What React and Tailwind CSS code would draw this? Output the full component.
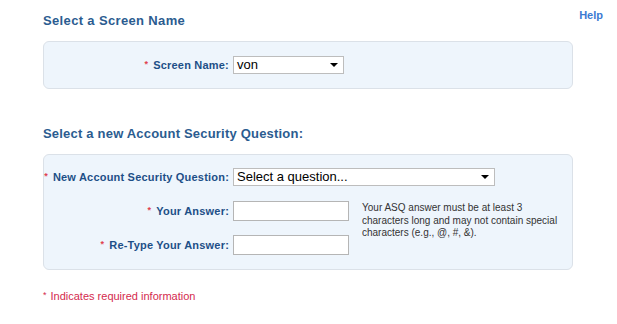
import React from 'react';

const Req = ({ className = '' }) => (
    <span className={`text-[#e0404f] text-[9px] relative -top-[2px] mr-[5px] ${className}`}>*</span>
);

const FakeSelect = ({ value, width }) => (
    <div
        className={`${width} h-[18px] bg-white border border-[#bdbdbd] flex items-center justify-between pl-[3px] pr-[5px]`}
    >
        <span className="text-[13px] leading-[16px] text-black">{value}</span>
        <span className="w-0 h-0 border-l-[4px] border-r-[4px] border-t-[4px] border-l-transparent border-r-transparent border-t-black"></span>
    </div>
);

const Label = ({ children }) => (
    <div className="w-[185px] text-right text-[11px] leading-[13px] font-bold text-[#1d4f87] tracking-[0.2px] pt-[1px]">
        <Req />
        {children}
    </div>
);

export default function App() {
    return (
        <div className="w-[617px] h-[324px] bg-white font-['Liberation_Sans',Arial,sans-serif]">
            <div className="pl-[43px] pr-[14px] pt-[9px]">
                <div className="flex justify-between items-start">
                    <h2 className="mt-[4px] text-[13px] leading-[16px] font-bold text-[#2b5c90] tracking-[0.35px]">
                        Select a Screen Name
                    </h2>
                    <a className="text-[11px] leading-[13px] font-bold text-[#3c7ad2] cursor-pointer">Help</a>
                </div>

                {/* screen name panel */}
                <div className="mt-[12px] w-[530px] h-[48px] rounded-[6px] border border-[#dbe1e8] bg-[#eef5fc] flex items-center">
                    <Label>Screen Name:</Label>
                    <div className="ml-[4px]">
                        <FakeSelect value="von" width="w-[111px]" />
                    </div>
                </div>

                <h2 className="mt-[37px] text-[13px] leading-[16px] font-bold text-[#2b5c90] tracking-[0.2px]">
                    Select a new Account Security Question:
                </h2>

                {/* security question panel */}
                <div className="mt-[12px] w-[530px] h-[116px] rounded-[6px] border border-[#dbe1e8] bg-[#eef5fc] pt-[13px]">
                    <div className="flex items-center h-[18px]">
                        <Label>New Account Security Question:</Label>
                        <div className="ml-[4px]">
                            <FakeSelect value="Select a question..." width="w-[262px]" />
                        </div>
                    </div>
                    <div className="flex mt-[15px]">
                        <div className="flex flex-col gap-[14px]">
                            <div className="flex items-center h-[20px]">
                                <Label>Your Answer:</Label>
                                <div className="ml-[4px] w-[116px] h-[20px] bg-white border border-[#b5b5b5]"></div>
                            </div>
                            <div className="flex items-center h-[20px]">
                                <Label>Re-Type Your Answer:</Label>
                                <div className="ml-[4px] w-[116px] h-[20px] bg-white border border-[#b5b5b5]"></div>
                            </div>
                        </div>
                        <p className="ml-[13px] w-[205px] text-[10px] leading-[12.5px] text-[#333333] pt-[1px]">
                            Your ASQ answer must be at least 3 characters long and may not contain special characters (e.g., @, #, &amp;).
                        </p>
                    </div>
                </div>

                <p className="mt-[20px] text-[11px] leading-[13px] text-[#d42a4e]">
                    <span className="text-[9px] relative -top-[2px] mr-[4px]">*</span>
                    Indicates required information
                </p>
            </div>
        </div>
    );
}
